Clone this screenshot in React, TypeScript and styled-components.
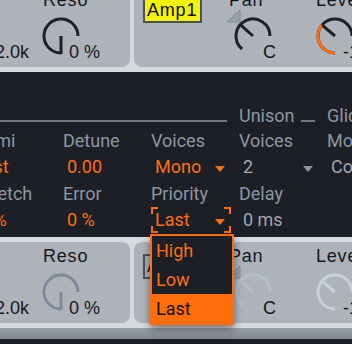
import React from 'react';
import styled, { createGlobalStyle } from 'styled-components';

const ORANGE = '#ff6d0d';
const DARK = '#1c1f26';
const PANEL = '#aeb3b9';
const STRIP = '#d6d9dd';
const LABEL = '#8d96a2';
const MUTED = '#a0a6af';
const INK = '#15171b';

const GlobalStyle = createGlobalStyle`
  html, body {
    margin: 0;
    padding: 0;
    background: ${DARK};
    overflow: hidden;
  }
`;

type KnobKind = 'reso' | 'pan' | 'level';

const KNOBS: Record<KnobKind, { from: number; to: number; needle: number; len: number }> = {
  reso: { from: -180, to: 90, needle: 180, len: 18 },
  pan: { from: -140, to: 90, needle: -48, len: 16 },
  level: { from: -180, to: 90, needle: -50, len: 16 },
};

const pt = (a: number, r: number) => {
  const rad = (a * Math.PI) / 180;
  return [20 + r * Math.sin(rad), 20 - r * Math.cos(rad)];
};

const arc = (a1: number, a2: number, r: number) => {
  const [x1, y1] = pt(a1, r);
  const [x2, y2] = pt(a2, r);
  const large = a2 - a1 > 180 ? 1 : 0;
  return `M${x1.toFixed(2)} ${y1.toFixed(2)} A${r} ${r} 0 ${large} 1 ${x2.toFixed(2)} ${y2.toFixed(2)}`;
};

const Knob = ({ kind, color, fill, marker }: { kind: KnobKind; color: string; fill?: string; marker?: boolean }) => {
  const k = KNOBS[kind];
  const [nx, ny] = pt(k.needle, k.len);
  return (
    <KnobSvg width="40" height="40" viewBox="0 0 40 40">
      {marker && <polygon points="7,-6 -6,6 7,6" fill="#979ea6" stroke="#858c94" strokeWidth="1" />}
      <path d={arc(k.from, k.to, 17)} fill="none" stroke={color} strokeWidth="3" />
      {fill && <path d={arc(k.from, k.needle, 17)} fill="none" stroke={fill} strokeWidth="3" />}
      <line x1="20" y1="20" x2={nx} y2={ny} stroke={color} strokeWidth="3" />
    </KnobSvg>
  );
};

const DropArrow = ({ color }: { color: string }) => (
  <ArrowSvg width="10" height="6" viewBox="0 0 10 6">
    <polygon points="0,0 10,0 5,6" fill={color} />
  </ArrowSvg>
);

type CellProps = {
  label: string;
  value: string;
  kind: KnobKind;
  labelX: number;
  valueX: number;
  color: string;
  fill?: string;
  marker?: boolean;
};

const KnobCell = ({ label, value, kind, labelX, valueX, color, fill, marker }: CellProps) => (
  <Cell>
    <KnobLabel $x={labelX}>{label}</KnobLabel>
    <KnobBody>
      <Knob kind={kind} color={color} fill={fill} marker={marker} />
      <KnobValue $x={valueX}>{value}</KnobValue>
    </KnobBody>
  </Cell>
);

const App = () => {
  const dark = '#1d2027';
  return (
    <Screen>
      <GlobalStyle />
      <Rack $top>
        <FilterPanel>
          <KnobCell label="Freq" value="2.0k" kind="reso" labelX={2} valueX={-4} color={dark} />
          <KnobCell label="Reso" value="0 %" kind="reso" labelX={2} valueX={-12} color={dark} />
        </FilterPanel>
        <AmpPanel>
          <AmpTag $active>Amp1</AmpTag>
          <Spacer />
          <KnobCell label="Pan" value="C" kind="pan" labelX={-4} valueX={-10} color={dark} marker />
          <KnobCell label="Level" value="-12 dB" kind="level" labelX={1} valueX={-12} color={dark} fill={ORANGE} />
        </AmpPanel>
      </Rack>

      <DarkSection>
        <Grid>
          <Section $col="1 / span 4">
            Pitch
            <SectionLine />
          </Section>
          <Section $col="5">
            Unison
            <SectionLine />
          </Section>
          <Section $col="6">Glide</Section>

          <Label>Oct</Label>
          <Label>Semi</Label>
          <Label>Detune</Label>
          <Label>Voices</Label>
          <Label>Voices</Label>
          <Label>Mode</Label>

          <Value $color={ORANGE}>0</Value>
          <Value $color={ORANGE}>0 st</Value>
          <Value $color={ORANGE}>0.00</Value>
          <Value $color={ORANGE}>
            Mono
            <DropArrow color={ORANGE} />
          </Value>
          <Value $color={MUTED}>
            2
            <DropArrow color={LABEL} />
          </Value>
          <Value $color={MUTED}>Const</Value>

          <Label>Fine</Label>
          <Label>Stretch</Label>
          <Label>Error</Label>
          <Label>Priority</Label>
          <Label>Delay</Label>
          <Label />

          <Value $color={ORANGE}>0</Value>
          <Value $color={ORANGE}>0 %</Value>
          <Value $color={ORANGE}>0 %</Value>
          <Value $color={ORANGE} $focused>
            Last
            <DropArrow color={ORANGE} />
            <Menu>
              <MenuItem>High</MenuItem>
              <MenuItem>Low</MenuItem>
              <MenuItem $active>Last</MenuItem>
            </Menu>
          </Value>
          <Value $color={MUTED}>0 ms</Value>
          <Value $color={MUTED} />
        </Grid>
      </DarkSection>

      <Rack>
        <FilterPanel>
          <KnobCell label="Freq" value="2.0k" kind="reso" labelX={2} valueX={-4} color="#7e8999" />
          <KnobCell label="Reso" value="0 %" kind="reso" labelX={2} valueX={-12} color="#7e8999" />
        </FilterPanel>
        <AmpPanel>
          <AmpTag>Amp2</AmpTag>
          <Spacer />
          <KnobCell label="Pan" value="C" kind="pan" labelX={-4} valueX={-10} color="#b5bec9" marker />
          <KnobCell label="Level" value="-12 dB" kind="level" labelX={1} valueX={-12} color="#c9d0d9" />
        </AmpPanel>
      </Rack>

      <Foot>
        <Band />
        <FootDark />
      </Foot>
    </Screen>
  );
};

export default App;

const Screen = styled.div`
  width: 352px;
  height: 344px;
  overflow: hidden;
  display: flex;
  flex-direction: column;
  gap: 5px;
  background: ${STRIP};
`;

const Rack = styled.div<{ $top?: boolean }>`
  display: flex;
  gap: 4px;
  height: 81px;
  flex-shrink: 0;
  margin-top: ${(p) => (p.$top ? '-14px' : '0')};
`;

const PanelBase = styled.div`
  flex-shrink: 0;
  display: flex;
  align-items: flex-start;
  box-sizing: border-box;
  background: ${PANEL};
  border-radius: 8px;
  padding: 4px 0 5px 9px;
`;

const FilterPanel = styled(PanelBase)`
  width: 180px;
  margin-left: -50px;
`;

const AmpPanel = styled(PanelBase)`
  width: 320px;
`;

const Spacer = styled.div`
  width: 31px;
  flex-shrink: 0;
`;

const AmpTag = styled.div<{ $active?: boolean }>`
  width: 59px;
  height: 25px;
  margin-top: 8px;
  flex-shrink: 0;
  box-sizing: border-box;
  border: 2px solid #4b5160;
  background: ${(p) => (p.$active ? '#f2f20a' : '#a9aeb4')};
  color: #0d0d0d;
  font: 18px/21px 'Liberation Sans', Arial, sans-serif;
  letter-spacing: 0.8px;
  padding-left: 2px;
  white-space: nowrap;
  overflow: hidden;
`;

const Cell = styled.div`
  width: 82px;
  flex-shrink: 0;
  display: flex;
  flex-direction: column;
`;

const KnobLabel = styled.div<{ $x: number }>`
  margin-left: ${(p) => p.$x}px;
  font: 18px/20px 'Liberation Sans', Arial, sans-serif;
  letter-spacing: 0.8px;
  color: ${INK};
  white-space: nowrap;
`;

const KnobBody = styled.div`
  display: flex;
  margin-top: 6px;
  height: 46px;
`;

const KnobSvg = styled.svg`
  display: block;
  flex-shrink: 0;
  overflow: visible;
`;

const KnobValue = styled.div<{ $x: number }>`
  margin-left: ${(p) => p.$x}px;
  margin-top: 26px;
  font: 18px/20px 'Liberation Sans', Arial, sans-serif;
  color: ${INK};
  white-space: nowrap;
`;

const DarkSection = styled.div`
  flex-shrink: 0;
  height: 165px;
  box-sizing: border-box;
  padding-top: 32px;
  background: ${DARK};
`;

const Grid = styled.div`
  display: grid;
  grid-template-columns: repeat(6, 80px);
  grid-template-rows: 24px repeat(4, 26.3px);
  column-gap: 8px;
  margin-left: -113px;
  font-family: Roboto, 'Liberation Sans', sans-serif;
  font-size: 18px;
`;

const Section = styled.div<{ $col: string }>`
  grid-column: ${(p) => p.$col};
  display: flex;
  align-items: flex-end;
  line-height: 24px;
  color: ${LABEL};
  white-space: nowrap;
`;

const SectionLine = styled.div`
  flex: 1;
  height: 2px;
  margin: 0 4px 6px 6px;
  background: #6f7783;
`;

const Label = styled.div`
  line-height: 26.3px;
  color: ${LABEL};
  white-space: nowrap;
`;

const bracket = (c: string) => `
  linear-gradient(${c}, ${c}) left top / 7px 2px,
  linear-gradient(${c}, ${c}) left top / 2px 7px,
  linear-gradient(${c}, ${c}) right top / 7px 2px,
  linear-gradient(${c}, ${c}) right top / 2px 7px,
  linear-gradient(${c}, ${c}) left bottom / 7px 2px,
  linear-gradient(${c}, ${c}) left bottom / 2px 7px,
  linear-gradient(${c}, ${c}) right bottom / 7px 2px,
  linear-gradient(${c}, ${c}) right bottom / 2px 7px
`;

const Value = styled.div<{ $color: string; $focused?: boolean }>`
  position: relative;
  display: flex;
  align-items: center;
  justify-content: space-between;
  padding: 0 6px 0 4px;
  line-height: 26.3px;
  color: ${(p) => p.$color};
  white-space: nowrap;
  background: ${(p) => (p.$focused ? bracket(ORANGE) : 'none')};
  background-repeat: no-repeat;
`;

const ArrowSvg = styled.svg`
  display: block;
  margin-top: 3px;
`;

const Menu = styled.div`
  position: absolute;
  left: -1px;
  top: calc(100% + 1px);
  width: 84px;
  box-sizing: border-box;
  border: 2px solid ${ORANGE};
  background: ${DARK};
  box-shadow: 0 4px 8px rgba(0, 0, 0, 0.45);
  z-index: 10;
`;

const MenuItem = styled.div<{ $active?: boolean }>`
  height: 29px;
  line-height: 29px;
  padding-left: 4px;
  color: ${(p) => (p.$active ? '#111' : ORANGE)};
  background: ${(p) => (p.$active ? ORANGE : 'transparent')};
`;

const Foot = styled.div`
  flex: 1;
  display: flex;
  flex-direction: column;
`;

const Band = styled.div`
  height: 11px;
  background: linear-gradient(#9ca2a9, #7f858c);
`;

const FootDark = styled.div`
  flex: 1;
  background: ${DARK};
`;
